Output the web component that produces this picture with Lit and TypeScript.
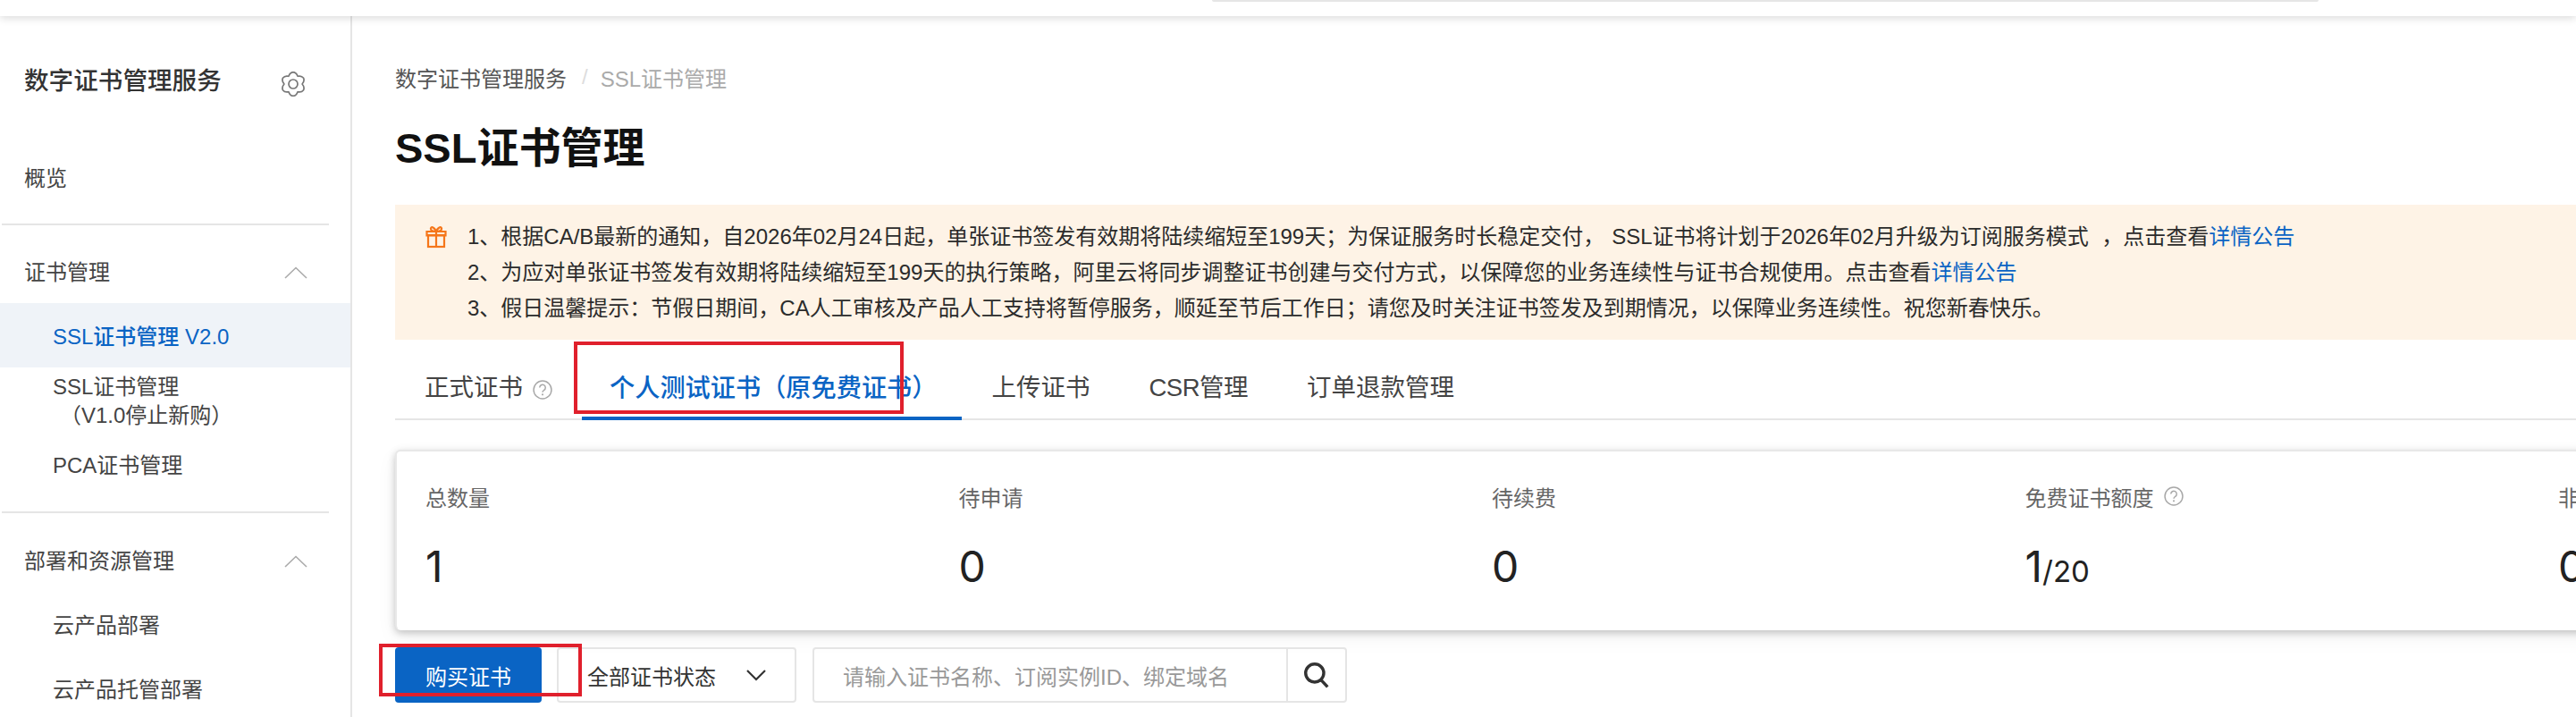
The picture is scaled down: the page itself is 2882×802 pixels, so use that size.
import { LitElement, html, css, unsafeCSS } from "lit";
import { customElement } from "lit/decorators.js";

const BLUE = unsafeCSS("#0a64c4");

function gearPath(): string {
  const c = 14;
  const pts: string[] = [];
  for (let k = 0; k < 6; k++) {
    const a = (Math.PI / 3) * k - Math.PI / 2;
    const at = (r: number, d: number) => {
      const x = c + r * Math.cos(a + d);
      const y = c + r * Math.sin(a + d);
      return `${x.toFixed(2)} ${y.toFixed(2)}`;
    };
    const cmd = k === 0 ? "M" : "L";
    pts.push(`${cmd}${at(10.2, -0.5)}`);
    pts.push(`Q${at(13.4, -0.28)} ${at(13.4, 0)}`);
    pts.push(`Q${at(13.4, 0.28)} ${at(10.2, 0.5)}`);
  }
  return pts.join(" ") + " Z";
}

const gear = html`<svg class="gear" width="28" height="28" viewBox="0 0 28 28" fill="none" stroke="#777" stroke-width="1.7" stroke-linejoin="round">
  <path d=${gearPath()}></path><circle cx="14" cy="14" r="5"></circle></svg>`;
const chevUp = html`<svg width="26" height="14" viewBox="0 0 26 14" fill="none" stroke="#aaa" stroke-width="1.6"><path d="M1 13 L13 1.5 L25 13"></path></svg>`;
const help = html`<svg class="help" width="22" height="22" viewBox="0 0 21 21" fill="none"><circle cx="10.5" cy="10.5" r="9.5" stroke="#a8a8a8" stroke-width="1.4"></circle><path d="M7.4 8.2a3.1 3.1 0 1 1 4.7 2.6c-1 .6-1.6 1.1-1.6 2.4" stroke="#a8a8a8" stroke-width="1.4"></path><circle cx="10.5" cy="15.6" r="1" fill="#a8a8a8"></circle></svg>`;
const gift = html`<svg width="24" height="26" viewBox="0 0 24 26" fill="none" stroke="#f5761a" stroke-width="2.2"><rect x="3" y="11" width="18" height="13"></rect><path d="M1.5 7h21v4.4h-21z M12 7v17 M12 7 C10 2 6.5 1 6 3.5 S9 7 12 7 C14 2 17.5 1 18 3.5 S15 7 12 7"></path></svg>`;

@customElement("app-root")
export class AppRoot extends LitElement {
  static styles = css`
    :host {
      display: block;
      position: relative;
      width: 2882px;
      height: 802px;
      overflow: hidden;
      background: #fff;
      color: #333;
      font-family: "Liberation Sans", "Noto Sans CJK SC", sans-serif;
      font-size: 24px;
    }
    .topbar {
      position: relative;
      z-index: 2;
      height: 18px;
      background: #fff;
      box-shadow: 0 3px 9px rgba(0, 0, 0, 0.13);
      padding-left: 1356px;
    }
    .topline {
      width: 1238px;
      height: 2px;
      background: #e6e6e6;
      border-radius: 0 0 4px 4px;
    }
    .layout {
      display: flex;
      height: 784px;
    }
    .side {
      flex: 0 0 394px;
      box-sizing: border-box;
      border-right: 2px solid #e5e5e5;
      overflow: hidden;
    }
    .side-title {
      display: flex;
      align-items: center;
      justify-content: space-between;
      margin-top: 34px;
      height: 72px;
      padding: 0 50px 0 27px;
      font-size: 27.6px;
      font-weight: 500;
      color: #333;
    }
    .gear {
      margin-top: 12px;
    }
    .row {
      box-sizing: border-box;
      display: flex;
      align-items: center;
      height: 72px;
      padding-top: 3px;
      line-height: 32px;
      padding-left: 27px;
      color: #444;
    }
    .row.first {
      margin-top: 38px;
    }
    .divider {
      height: 2px;
      width: 366px;
      margin: 16px 0 0 2px;
      background: #e5e5e5;
    }
    .head {
      justify-content: space-between;
      height: 70px;
      margin-top: 17px;
      padding-top: 1px;
      padding-right: 48px;
    }
    .head.second {
      padding-top: 2px;
      height: 71px;
    }
    .sub {
      padding-left: 59px;
      color: #444;
    }
    .sub.active {
      background: #eff3f8;
      color: ${BLUE};
      font-weight: 500;
    }
    .sub .indent {
      padding-left: 8px;
    }
    .divider.second {
      margin-top: 17px;
    }
    .main {
      flex: 1;
      min-width: 0;
      overflow: hidden;
      padding: 0 0 20px 48px;
    }
    .crumb {
      display: flex;
      align-items: center;
      margin-top: 48px;
      height: 40px;
      color: #555;
    }
    .crumb .sep {
      color: #ddd;
      margin: 0 14px 0 17px;
    }
    .crumb .cur {
      color: #aaa;
    }
    h1 {
      margin: 30px 0 0;
      height: 60px;
      line-height: 60px;
      font-size: 47px;
      font-weight: 700;
      color: #111;
    }
    .notice {
      display: flex;
      box-sizing: border-box;
      height: 151px;
      margin-top: 33px;
      padding: 16px 0 0 34px;
      background: #fef3e6;
      color: #2b2b2b;
    }
    .notice-icon {
      flex: 0 0 47px;
      height: 40px;
      display: flex;
      align-items: center;
    }
    .notice-line {
      height: 40px;
      line-height: 40px;
      white-space: pre;
    }
    .gap-a {
      margin-left: 8px;
    }
    .gap-b {
      margin-left: 8px;
    }
    a {
      color: ${BLUE};
      text-decoration: none;
    }
    .tabs {
      display: flex;
      box-sizing: border-box;
      height: 90px;
      border-bottom: 2px solid #e5e5e5;
    }
    .tab {
      box-sizing: border-box;
      display: flex;
      align-items: center;
      gap: 11px;
      height: 90px;
      padding: 34px 33px 16px;
      font-size: 27.5px;
      line-height: 40px;
      color: #444;
      white-space: nowrap;
    }
    .tab .help {
      margin-top: 4px;
    }
    .tab.active {
      padding: 34px 28px 12px 31px;
      font-size: 28.2px;
      color: ${BLUE};
      font-weight: 500;
      border-bottom: 4px solid ${BLUE};
    }
    .tab.tight {
      letter-spacing: -0.5px;
    }
    .stats {
      box-sizing: border-box;
      display: grid;
      grid-template-columns: repeat(5, 596.5px);
      width: 3040px;
      height: 202px;
      margin-top: 33px;
      padding: 0 32px;
      border: 2px solid #e8e8e8;
      border-bottom: 0;
      border-radius: 6px;
      background: #fff;
      box-shadow: 0 3px 8px rgba(0, 0, 0, 0.22), 0 8px 24px rgba(0, 0, 0, 0.05);
    }
    .label {
      display: flex;
      align-items: center;
      gap: 11px;
      margin-top: 30px;
      height: 40px;
      color: #666;
      white-space: nowrap;
    }
    .value {
      margin-top: 29px;
      height: 60px;
      line-height: 60px;
      font-family: Inter, "Liberation Sans", sans-serif;
      font-size: 48px;
      color: #222;
    }
    .value small {
      font-size: 33px;
    }
    .toolbar {
      display: flex;
      height: 62px;
      margin-top: 19px;
    }
    .buy {
      box-sizing: border-box;
      width: 164px;
      height: 62px;
      margin-right: 17px;
      border: 0;
      border-radius: 4px;
      background: ${BLUE};
      color: #fff;
      font: inherit;
      padding: 0;
    }
    .select {
      box-sizing: border-box;
      display: flex;
      align-items: center;
      justify-content: space-between;
      width: 268px;
      height: 62px;
      margin-right: 18px;
      padding: 0 31px 0 32px;
      border: 2px solid #e5e5e5;
      border-radius: 4px;
    }
    .search {
      box-sizing: border-box;
      display: flex;
      width: 598px;
      height: 62px;
      border: 2px solid #e5e5e5;
      border-radius: 4px;
    }
    .placeholder {
      flex: 1;
      display: flex;
      align-items: center;
      padding-left: 32px;
      color: #999;
      white-space: nowrap;
    }
    .search-btn {
      flex: 0 0 64px;
      display: flex;
      align-items: center;
      justify-content: center;
      border-left: 2px solid #e5e5e5;
    }
    .mark {
      position: absolute;
      box-sizing: border-box;
      border: 4px solid #e0202c;
      pointer-events: none;
    }
    .mark.tab-mark {
      left: 642px;
      top: 382px;
      width: 369px;
      height: 81px;
    }
    .mark.btn-mark {
      left: 424px;
      top: 720px;
      width: 227px;
      height: 59px;
    }
  `;

  render() {
    const stats = [
      { label: "总数量", value: html`1` },
      { label: "待申请", value: html`0` },
      { label: "待续费", value: html`0` },
      { label: "免费证书额度", value: html`1<small>/20</small>`, help: true },
      { label: "非", value: html`0` },
    ];
    return html`
      <div class="topbar"><div class="topline"></div></div>
      <div class="layout">
        <aside class="side">
          <div class="side-title"><span>数字证书管理服务</span>${gear}</div>
          <div class="row first">概览</div>
          <div class="divider"></div>
          <div class="row head"><span>证书管理</span>${chevUp}</div>
          <div class="row sub active">SSL证书管理 V2.0</div>
          <div class="row sub"><div>SSL证书管理<br /><span class="indent">（V1.0停止新购）</span></div></div>
          <div class="row sub">PCA证书管理</div>
          <div class="divider second"></div>
          <div class="row head second"><span>部署和资源管理</span>${chevUp}</div>
          <div class="row sub">云产品部署</div>
          <div class="row sub">云产品托管部署</div>
        </aside>
        <main class="main">
          <div class="crumb"><span>数字证书管理服务</span><span class="sep">/</span><span class="cur">SSL证书管理</span></div>
          <h1>SSL证书管理</h1>
          <section class="notice">
            <div class="notice-icon">${gift}</div>
            <div>
              <div class="notice-line">1、根据CA/B最新的通知，自2026年02月24日起，单张证书签发有效期将陆续缩短至199天；为保证服务时长稳定交付，<span class="gap-a">SSL</span>证书将计划于2026年02月升级为订阅服务模式<span class="gap-b"> </span>，点击查看<a>详情公告</a></div>
              <div class="notice-line">2、为应对单张证书签发有效期将陆续缩短至199天的执行策略，阿里云将同步调整证书创建与交付方式，以保障您的业务连续性与证书合规使用。点击查看<a>详情公告</a></div>
              <div class="notice-line">3、假日温馨提示：节假日期间，CA人工审核及产品人工支持将暂停服务，顺延至节后工作日；请您及时关注证书签发及到期情况，以保障业务连续性。祝您新春快乐。</div>
            </div>
          </section>
          <nav class="tabs">
            <div class="tab">正式证书${help}</div>
            <div class="tab active">个人测试证书（原免费证书）</div>
            <div class="tab">上传证书</div>
            <div class="tab tight">CSR管理</div>
            <div class="tab">订单退款管理</div>
          </nav>
          <section class="stats">
            ${stats.map(
              (s) => html`<div>
                <div class="label">${s.label}${s.help ? help : ""}</div>
                <div class="value">${s.value}</div>
              </div>`
            )}
          </section>
          <div class="toolbar">
            <button class="buy">购买证书</button>
            <div class="select">
              <span>全部证书状态</span>
              <svg width="24" height="14" viewBox="0 0 24 14" fill="none" stroke="#333" stroke-width="2.2"><path d="M2 2 L12 12 L22 2"></path></svg>
            </div>
            <div class="search">
              <div class="placeholder">请输入证书名称、订阅实例ID、绑定域名</div>
              <div class="search-btn">
                <svg width="32" height="32" viewBox="0 0 30 30" fill="none" stroke="#333" stroke-width="3.2"><circle cx="13" cy="13" r="9.5"></circle><path d="M19.5 20 L26.5 27.5"></path></svg>
              </div>
            </div>
          </div>
        </main>
      </div>
      <div class="mark tab-mark"></div>
      <div class="mark btn-mark"></div>
    `;
  }
}
